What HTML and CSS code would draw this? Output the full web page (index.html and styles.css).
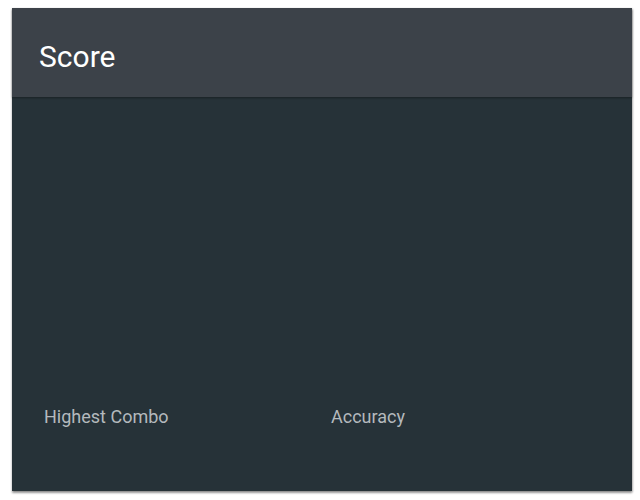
FILE: index.html
```html
<!DOCTYPE html>
<html>
<head>
<meta charset="utf-8">
<link rel="stylesheet" href="styles.css">
</head>
<body>
<div class="page">
  <section class="card">
    <header class="card-header">
      <h1 class="title">Score</h1>
    </header>
    <div class="card-body">
      <div class="stats">
        <div class="stat">Highest Combo</div>
        <div class="stat">Accuracy</div>
      </div>
    </div>
  </section>
</div>
</body>
</html>
```

FILE: styles.css
```css
html, body {
  margin: 0;
  padding: 0;
  background: #ffffff;
}
body {
  font-family: Roboto, "Liberation Sans", sans-serif;
}
.page {
  padding: 8px 8px 8px 12px;
}
.card {
  width: 620px;
  height: 483px;
  background: #263238;
  display: flex;
  flex-direction: column;
  box-shadow: 0 2px 2px rgba(0,0,0,0.35), 1px 1px 2px rgba(0,0,0,0.2);
}
.card-header {
  height: 89px;
  background: #3c4249;
  display: flex;
  align-items: center;
  padding-left: 27px;
  box-shadow: 0 1px 2px rgba(0,0,0,0.35);
  position: relative;
}
.title {
  margin: 0;
  font-weight: 400;
  font-size: 30px;
  color: #ffffff;
  margin-top: 8px;
}
.card-body {
  flex: 1;
  display: flex;
  flex-direction: column;
  justify-content: flex-end;
  padding: 0 0 64px 32px;
}
.stats {
  display: grid;
  grid-template-columns: 287px 1fr;
}
.stat {
  font-size: 18px;
  color: #b4b9bd;
}
```
